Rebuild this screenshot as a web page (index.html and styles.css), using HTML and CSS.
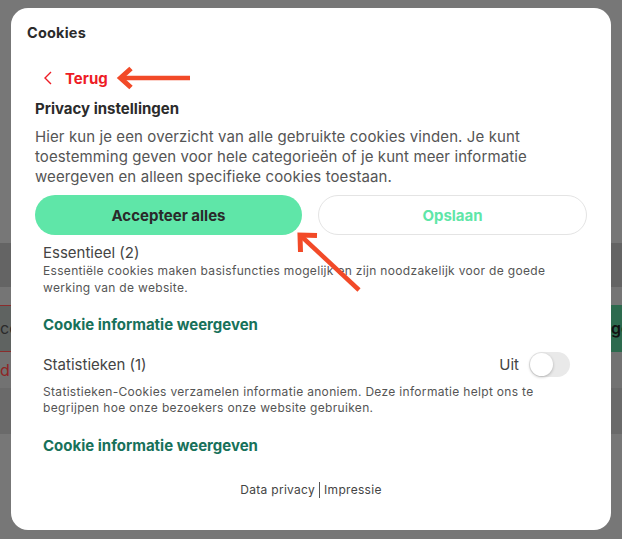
FILE: index.html
```html
<!DOCTYPE html>
<html lang="nl">
<head>
<meta charset="utf-8">
<title>Cookies</title>
<link rel="stylesheet" href="styles.css">
</head>
<body>
<div class="page">
  <div class="bg-top"></div>
  <div class="bg-band bg-dark"></div>
  <div class="bg-band bg-light"></div>
  <div class="bg-row">
    <div class="bg-input">co</div>
    <div class="bg-btn">go</div>
  </div>
  <div class="bg-band bg-mid"><span class="bg-err">d</span></div>
  <div class="bg-band bg-dark2"></div>
</div>

<div class="modal">
  <div class="modal-title">Cookies</div>
  <div class="modal-body">
    <a class="back" href="#">
      <svg class="back-icon" width="10" height="14" viewBox="0 0 10 14"><path d="M8 1 L2 7 L8 13" fill="none" stroke="currentColor" stroke-width="1.4"/></svg>
      <span>Terug</span>
    </a>
    <h2 class="section-title">Privacy instellingen</h2>
    <p class="intro">Hier kun je een overzicht van alle gebruikte cookies vinden. Je kunt toestemming geven voor hele categorieën of je kunt meer informatie weergeven en alleen specifieke cookies toestaan.</p>
    <div class="actions">
      <button class="btn btn-primary">Accepteer alles</button>
      <button class="btn btn-secondary">Opslaan</button>
    </div>
    <div class="group group-first">
      <div class="group-name">Essentieel (2)</div>
      <p class="group-desc">Essentiële cookies maken basisfuncties mogelijk en zijn noodzakelijk voor de goede werking van de website.</p>
      <a class="info-link first" href="#">Cookie informatie weergeven</a>
    </div>
    <div class="group">
      <div class="group-head">
        <div class="group-name">Statistieken (1)</div>
        <label class="switch-wrap"><span class="switch-label">Uit</span><span class="switch"><span class="knob"></span></span></label>
      </div>
      <p class="group-desc desc2">Statistieken-Cookies verzamelen informatie anoniem. Deze informatie helpt ons te begrijpen hoe onze bezoekers onze website gebruiken.</p>
      <a class="info-link second" href="#">Cookie informatie weergeven</a>
    </div>
    <div class="footer"><a href="#">Data privacy</a><span class="sep"></span><a href="#">Impressie</a></div>
  </div>
</div>

<svg class="annotations" width="622" height="539" viewBox="0 0 622 539">
  <g fill="none" stroke="#f24a28" stroke-width="4.5">
    <path d="M190 78 H121"/>
    <path d="M131 68.5 L120.5 78 L131 87.5" stroke-width="5"/>
    <path d="M359 290 L301 236"/>
    <path d="M317 235.5 L300 235 L300.5 252" stroke-width="5"/>
  </g>
</svg>
</body>
</html>
```

FILE: styles.css
```css
* { box-sizing: border-box; }
html, body { margin: 0; padding: 0; }
body {
  width: 622px;
  height: 539px;
  overflow: hidden;
  background: #777777;
  font-family: "Inter", "Open Sans", sans-serif;
  position: relative;
}

/* dimmed page behind the dialog */
.page { display: flex; flex-direction: column; }
.bg-top { height: 243px; background: #777777; }
.bg-band { height: 44px; }
.bg-dark { background: #646464; }
.bg-light { height: 18px; background: #757575; }
.bg-row { display: flex; height: 47px; justify-content: space-between; }
.bg-input {
  width: 40px;
  background: #5f6361;
  border-top: 1px solid #8a2c2c;
  border-bottom: 1px solid #8a2c2c;
  color: #2a2a2a;
  font-size: 16px;
  line-height: 45px;
  overflow: hidden;
}
.bg-btn {
  width: 40px;
  padding-left: 29px;
  background: #2d6a4e;
  color: #111;
  font-weight: 600;
  font-size: 16px;
  line-height: 47px;
  white-space: nowrap;
  overflow: hidden;
}
.bg-mid { height: 36px; background: #727272; }
.bg-err { color: #8f2424; font-size: 16px; line-height: 36px; }
.bg-dark2 { height: 46px; background: #6a6a6a; }

/* dialog */
.modal {
  position: absolute;
  left: 11px;
  top: 8px;
  width: 600px;
  height: 522px;
  background: #fff;
  border-radius: 17px;
  padding-top: 15px;
}
.modal-title {
  padding-left: 16px;
  font-size: 14.5px;
  letter-spacing: 0.2px;
  font-weight: 700;
  line-height: 20px;
  color: #2b2b2b;
}
.modal-body { padding: 0 24px; }

.back {
  display: flex;
  align-items: center;
  margin-top: 25px;
  padding-left: 8px;
  height: 20px;
  color: #ee1c25;
  text-decoration: none;
  font-weight: 700;
  font-size: 15px;
}
.back-icon { margin-right: 12px; }

.section-title {
  margin: 11px 0 0;
  font-size: 15px;
  line-height: 20px;
  font-weight: 700;
  color: #2b2b2b;
}
.intro {
  margin: 8px 0 0;
  font-size: 15px;
  line-height: 20px;
  letter-spacing: 0.1px;
  color: #555;
}

.actions { display: flex; gap: 16px; margin-top: 8px; }
.btn {
  flex: 1;
  height: 40px;
  border-radius: 20px;
  font-family: inherit;
  font-size: 15px;
  font-weight: 700;
}
.btn-primary { background: #5fe6a8; border: none; color: #2a2a2a; }
.btn-secondary { background: #fff; border: 1px solid #e4e4e4; color: #5fe6a8; }

.group { padding: 0 17px 0 8px; }
.group-first { padding-top: 9px; }
.group-name { font-size: 15px; line-height: 18px; color: #444; }
.group-desc { margin: 0; font-size: 12px; line-height: 17px; letter-spacing: 0.32px; color: #555; }
.desc2 { margin-top: 7px; line-height: 16px; }
.info-link {
  display: block;
  font-size: 15px;
  line-height: 20px;
  font-weight: 700;
  color: #17715a;
  text-decoration: none;
}
.info-link.first { margin-top: 19px; }
.info-link.second { margin-top: 20px; }

.group-head {
  display: flex;
  align-items: center;
  justify-content: space-between;
  height: 25px;
  margin-top: 17px;
}
.switch-wrap { display: flex; align-items: center; gap: 10px; }
.switch-label { font-size: 15px; color: #444; }
.switch {
  width: 41px;
  height: 25px;
  border-radius: 13px;
  background: #e9e9e9;
  position: relative;
}
.knob {
  position: absolute;
  left: 1px;
  top: 1px;
  width: 23px;
  height: 23px;
  border-radius: 50%;
  background: #fff;
  box-shadow: 0 1px 3px rgba(0,0,0,0.25);
}

.footer {
  margin-top: 26px;
  display: flex;
  justify-content: center;
  align-items: center;
  font-size: 12px;
  line-height: 16px;
  letter-spacing: 0.3px;
}
.footer a { color: #444; text-decoration: none; }
.sep { width: 1px; height: 16px; background: #555; margin: 0 4px; }

.annotations { position: absolute; left: 0; top: 0; pointer-events: none; }
```
